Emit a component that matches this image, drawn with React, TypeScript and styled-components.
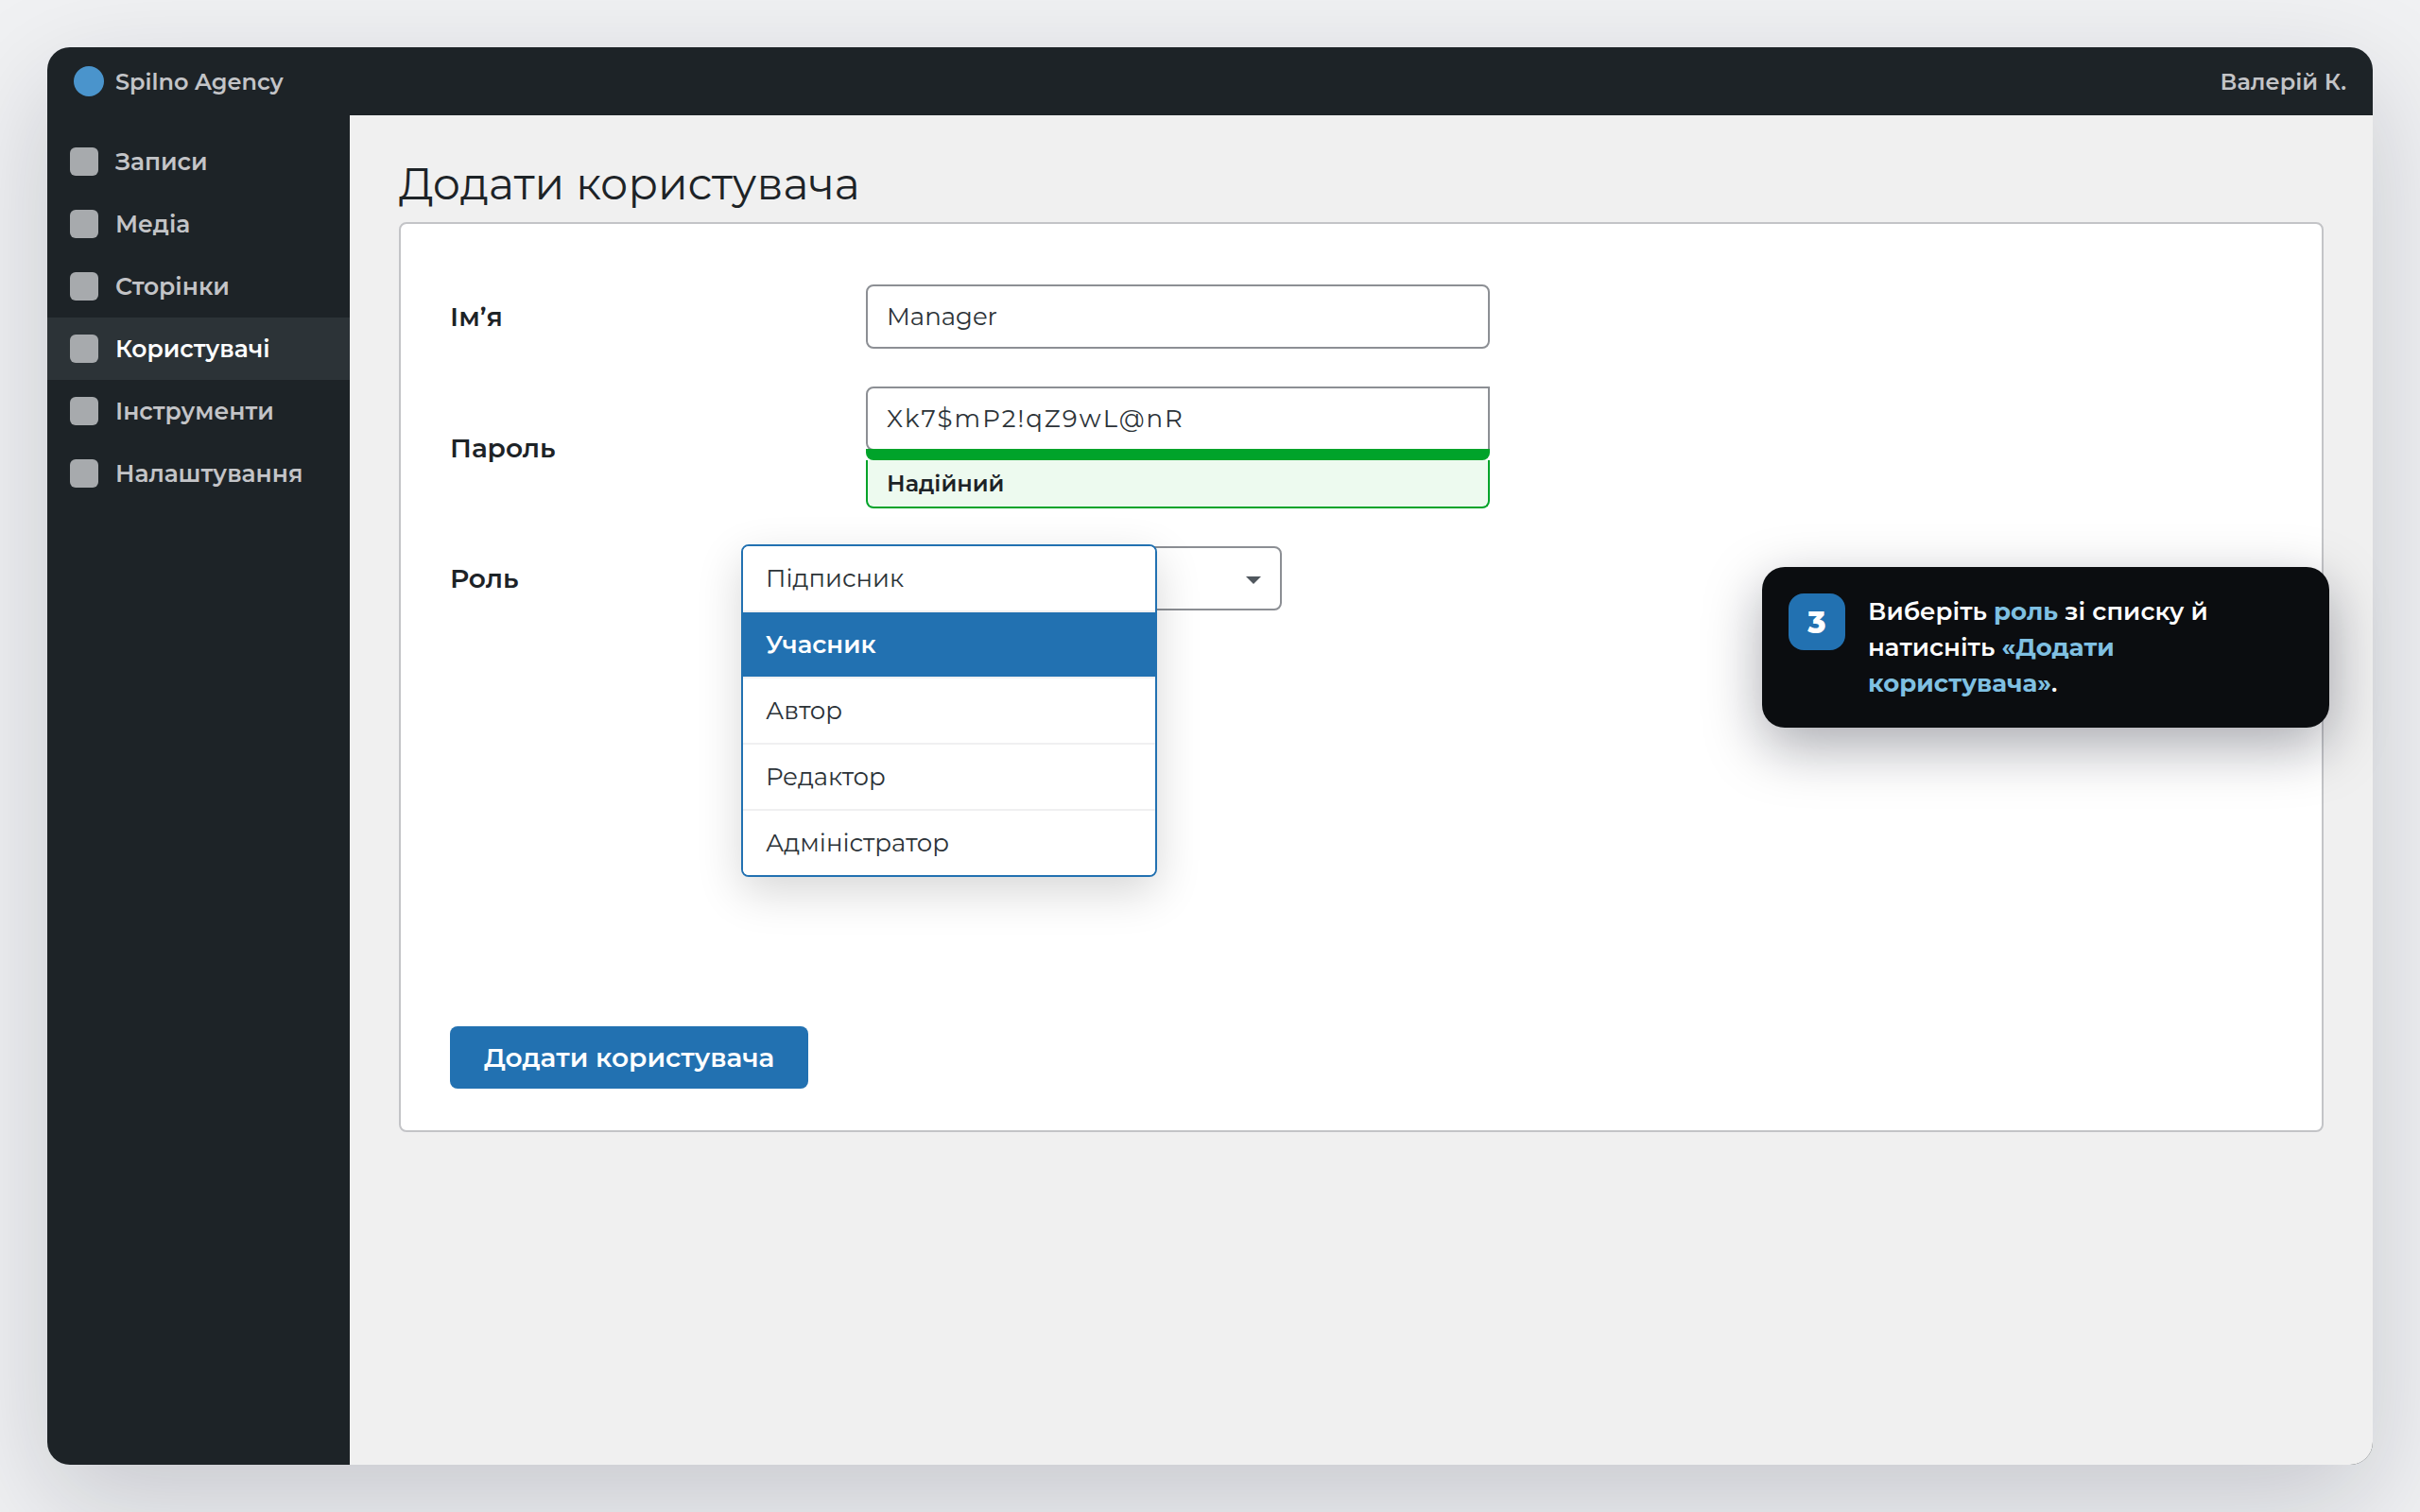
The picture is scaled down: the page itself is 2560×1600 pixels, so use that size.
import React, { useState } from 'react';
import styled, { createGlobalStyle, css } from 'styled-components';

const font = "Montserrat, Inter, 'Open Sans', sans-serif";

const GlobalStyle = createGlobalStyle`
  *, *::before, *::after { box-sizing: border-box; }
  body {
    margin: 0;
    background: #f0f1f3;
    color: #1d2327;
    font-family: ${font};
    font-size: 28px;
  }
  button, input, select { font: inherit; color: inherit; }
`;

const Stage = styled.div`
  display: flex;
  min-height: 100vh;
  padding: 50px;
  overflow: hidden;
`;

const Window = styled.div`
  position: relative;
  display: flex;
  flex: 1;
  flex-direction: column;
  border-radius: 24px;
  background: #1d2327;
  box-shadow: 0 40px 120px rgba(10, 16, 40, 0.18);
`;

const TopBar = styled.header`
  display: flex;
  align-items: center;
  justify-content: space-between;
  height: 72px;
  padding: 0 28px;
  color: #c3c4c7;
  font-size: 24px;
  font-weight: 600;
`;

const Brand = styled.div`
  display: flex;
  align-items: center;
  gap: 12px;
`;

const BrandMark = styled.span`
  width: 32px;
  height: 32px;
  border-radius: 50%;
  background: #4a94cc;
`;

const Body = styled.div`
  display: flex;
  flex: 1;
`;

const Sidebar = styled.nav`
  display: flex;
  flex-direction: column;
  width: 320px;
  padding-top: 16px;
`;

const NavItem = styled.a<{ $active: boolean }>`
  display: flex;
  align-items: center;
  gap: 18px;
  height: 66px;
  padding: 0 24px;
  background: ${({ $active }) => ($active ? '#2c3337' : 'transparent')};
  color: ${({ $active }) => ($active ? '#fff' : '#c3c4c7')};
  font-size: 25px;
  font-weight: 600;
  text-decoration: none;
`;

const NavIcon = styled.span`
  width: 30px;
  height: 30px;
  border-radius: 6px;
  background: #a7aaad;
`;

const Main = styled.main`
  flex: 1;
  min-width: 0;
  padding: 40px 52px;
  border-bottom-right-radius: 24px;
  background: #f0f0f0;
`;

const Title = styled.h1`
  margin: 0 0 8px;
  font-size: 46px;
  font-weight: 400;
  line-height: 65px;
`;

const Card = styled.form`
  padding: 44px 52px;
  border: 2px solid #c3c4c7;
  border-radius: 8px;
  background: #fff;
`;

const Row = styled.div`
  display: grid;
  grid-template-columns: 440px minmax(0, 660px);
  align-items: center;
  padding: 20px 0;
`;

const Label = styled.label`
  font-weight: 600;
`;

const control = css`
  height: 68px;
  padding: 0 20px;
  border: 2px solid #8c8f94;
  background: #fff;
  color: #2c3338;
  font-size: 26px;
  outline: none;
`;

const TextInput = styled.input`
  ${control}
  display: block;
  width: 100%;
  border-radius: 8px;
`;

const PasswordInput = styled(TextInput)`
  border-radius: 8px 0 0 8px;
  letter-spacing: 2px;
`;

const StrengthBar = styled.div`
  position: relative;
  height: 12px;
  margin-top: -2px;
  border-radius: 0 0 8px 8px;
  background: #00a32a;
`;

const Strength = styled.output`
  display: flex;
  align-items: center;
  height: 51px;
  padding: 0 20px;
  border: 2px solid #00a32a;
  border-top: 0;
  border-radius: 0 0 8px 8px;
  background: #edfaef;
  font-size: 24px;
  font-weight: 600;
`;

const SelectBox = styled.div`
  position: relative;
  width: 440px;
`;

const Select = styled.select`
  ${control}
  display: block;
  width: 100%;
  border-radius: 8px;
  appearance: none;
`;

const Caret = styled.svg`
  position: absolute;
  top: 32px;
  right: 22px;
  width: 16px;
  height: 8px;
  fill: #50575e;
  pointer-events: none;
`;

const Menu = styled.ul`
  position: absolute;
  z-index: 1;
  top: -2px;
  left: -30%;
  width: 100%;
  margin: 0;
  padding: 0;
  overflow: hidden;
  border: 2px solid #2271b1;
  border-radius: 8px;
  background: #fff;
  box-shadow: 0 16px 48px rgba(0, 0, 0, 0.16);
  list-style: none;
`;

const MenuItem = styled.li<{ $selected: boolean }>`
  padding: 0 24px;
  background: ${({ $selected }) => ($selected ? '#2271b1' : '#fff')};
  color: ${({ $selected }) => ($selected ? '#fff' : '#2c3338')};
  font-size: 26px;
  font-weight: ${({ $selected }) => ($selected ? 600 : 400)};
  line-height: 68px;

  & + & { border-top: 2px solid #f0f0f1; }
`;

const Actions = styled.div`
  margin-top: 420px;
`;

const SubmitButton = styled.button`
  height: 66px;
  padding: 0 36px;
  border: 0;
  border-radius: 8px;
  background: #2271b1;
  color: #fff;
  font-size: 28px;
  font-weight: 600;
`;

const Callout = styled.aside`
  position: absolute;
  z-index: 2;
  top: 550px;
  right: 46px;
  display: flex;
  align-items: flex-start;
  gap: 24px;
  width: 600px;
  padding: 28px;
  border-radius: 24px;
  background: #0b0d10;
  box-shadow: 0 20px 60px rgba(10, 12, 30, 0.35);
  color: #fff;
`;

const StepBadge = styled.span`
  display: grid;
  flex: none;
  place-items: center;
  width: 60px;
  height: 60px;
  border-radius: 16px;
  background: #2271b1;
  font-size: 32px;
  font-weight: 800;
`;

const CalloutText = styled.p`
  margin: 0;
  font-size: 26px;
  font-weight: 600;
  line-height: 38px;

  em {
    color: #7fc0e2;
    font-style: normal;
    font-weight: 700;
  }
`;

const sections = ['Записи', 'Медіа', 'Сторінки', 'Користувачі', 'Інструменти', 'Налаштування'];
const roles = ['Підписник', 'Учасник', 'Автор', 'Редактор', 'Адміністратор'];

export default function App() {
  const [role, setRole] = useState('Учасник');

  return (
    <>
      <GlobalStyle />
      <Stage>
        <Window>
          <TopBar>
            <Brand>
              <BrandMark />
              <span>Spilno Agency</span>
            </Brand>
            <span>Валерій К.</span>
          </TopBar>
          <Body>
            <Sidebar>
              {sections.map((name) => (
                <NavItem key={name} href="#" $active={name === 'Користувачі'}>
                  <NavIcon />
                  <span>{name}</span>
                </NavItem>
              ))}
            </Sidebar>
            <Main>
              <Title>Додати користувача</Title>
              <Card onSubmit={(e) => e.preventDefault()}>
                <Row>
                  <Label htmlFor="name">Ім’я</Label>
                  <TextInput id="name" defaultValue="Manager" />
                </Row>
                <Row>
                  <Label htmlFor="password">Пароль</Label>
                  <div>
                    <PasswordInput id="password" defaultValue="Xk7$mP2!qZ9wL@nR" spellCheck={false} />
                    <StrengthBar />
                    <Strength htmlFor="password">Надійний</Strength>
                  </div>
                </Row>
                <Row>
                  <Label htmlFor="role">Роль</Label>
                  <SelectBox>
                    <Select id="role" value={role} onChange={(e) => setRole(e.target.value)}>
                      {roles.map((r) => (
                        <option key={r}>{r}</option>
                      ))}
                    </Select>
                    <Caret viewBox="0 0 16 8">
                      <path d="M0 0h16L8 8z" />
                    </Caret>
                    <Menu role="listbox">
                      {roles.map((r) => (
                        <MenuItem
                          key={r}
                          role="option"
                          aria-selected={r === role}
                          $selected={r === role}
                          onClick={() => setRole(r)}
                        >
                          {r}
                        </MenuItem>
                      ))}
                    </Menu>
                  </SelectBox>
                </Row>
                <Actions>
                  <SubmitButton type="submit">Додати користувача</SubmitButton>
                </Actions>
              </Card>
            </Main>
          </Body>
          <Callout>
            <StepBadge>3</StepBadge>
            <CalloutText>
              Виберіть <em>роль</em> зі списку й<br />
              натисніть <em>«Додати<br />
              користувача»</em>.
            </CalloutText>
          </Callout>
        </Window>
      </Stage>
    </>
  );
}
